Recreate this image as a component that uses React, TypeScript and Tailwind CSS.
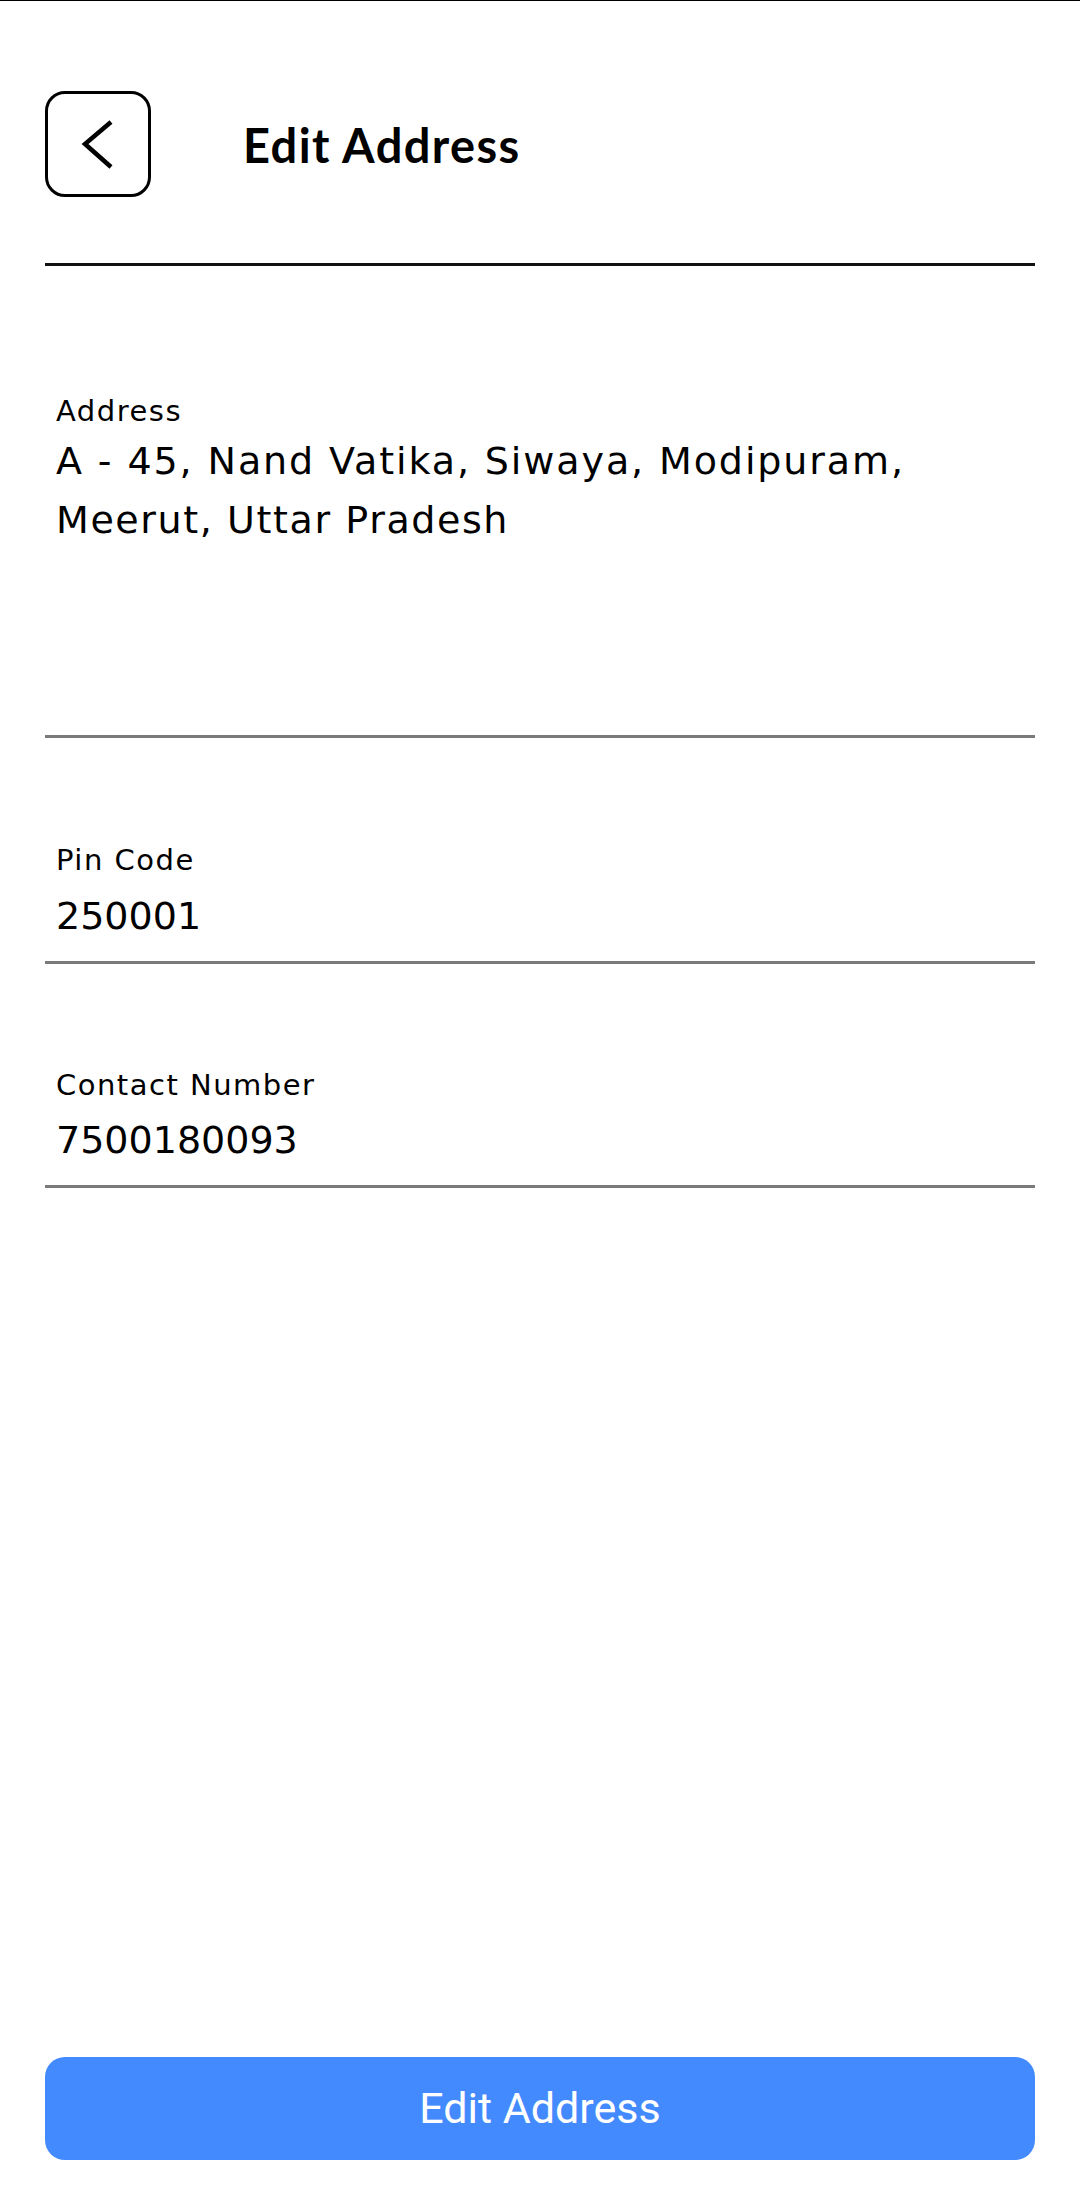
import React from "react";

function Field({
  label,
  value,
  mt,
  valueMt,
}: {
  label: string;
  value: string;
  mt: string;
  valueMt: string;
}) {
  return (
    <div className={`mx-[45px] border-b-[3px] border-[#7a7a7a] pl-[11px] pb-[15px] ${mt}`}>
      <div className="text-[29px] leading-[36px] tracking-[1.5px] text-black">{label}</div>
      <div className={`text-[38px] leading-[59px] text-black whitespace-nowrap ${valueMt}`}>{value}</div>
    </div>
  );
}

export default function App() {
  return (
    <div className="w-[1080px] h-[2206px] bg-white flex flex-col border-t border-black font-['DejaVu_Sans',sans-serif] overflow-hidden">
      <div className="pt-[90px] px-[45px] flex items-start">
        <div className="w-[106px] h-[106px] border-[3px] border-black rounded-[20px] shrink-0">
          <svg width="100" height="100" viewBox="0 0 100 100" className="block">
            <polyline
              points="63,28 37,50 63,73"
              fill="none"
              stroke="#000"
              strokeWidth="4.5"
              strokeLinejoin="miter"
              strokeLinecap="butt"
            />
          </svg>
        </div>
        <div className="ml-[92px] mt-[31px] text-[47px] leading-[47px] font-bold tracking-[1.4px] text-black font-['Lato',sans-serif]">
          Edit Address
        </div>
      </div>
      <div className="mt-[66px] mx-[45px] h-[3px] bg-[#111111]" />

      <div className="mx-[45px] mt-[127px] pb-[185px] border-b-[3px] border-[#7a7a7a] pl-[11px]">
        <div className="text-[29px] leading-[36px] tracking-[1.5px] text-black">Address</div>
        <div className="mt-[3px] text-[38px] leading-[59px] text-black">
          <div className="whitespace-nowrap tracking-[1.9px]">A - 45, Nand Vatika, Siwaya, Modipuram,</div>
          <div className="whitespace-nowrap tracking-[1.6px]">Meerut, Uttar Pradesh</div>
        </div>
      </div>

      <Field label="Pin Code" value="250001" mt="mt-[104px]" valueMt="mt-[9px]" />
      <Field label="Contact Number" value="7500180093" mt="mt-[103px]" valueMt="mt-[8px]" />

      <div className="flex-1" />
      <div className="mx-[45px] mb-[46px] h-[103px] rounded-[20px] bg-[#448aff] flex items-center justify-center">
        <span className="text-white text-[43px] font-['Roboto',sans-serif]">Edit Address</span>
      </div>
    </div>
  );
}
